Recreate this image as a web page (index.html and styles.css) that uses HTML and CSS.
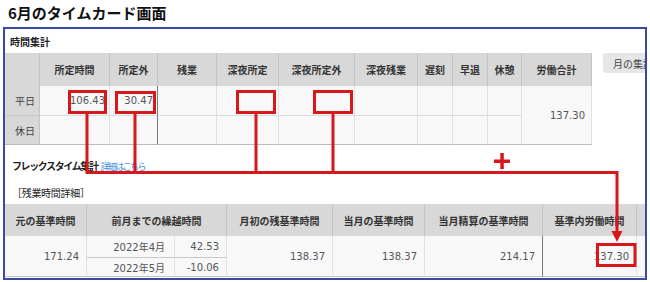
FILE: index.html
```html
<!DOCTYPE html>
<html lang="ja">
<head>
<meta charset="utf-8">
<title>6月のタイムカード画面</title>
<link rel="stylesheet" href="styles.css">
</head>
<body>
<div class="page">
  <h1 class="title">6月のタイムカード画面</h1>
  <div class="frame">
    <div class="sec-title">時間集計</div>
    <div class="sum-row">
      <table class="t1">
        <colgroup>
          <col class="c35"><col class="c70"><col class="c48"><col class="c59"><col class="c62"><col class="c76"><col class="c63"><col class="c35"><col class="c35"><col class="c34"><col class="c70">
        </colgroup>
        <thead>
          <tr>
            <th></th><th>所定時間</th><th>所定外</th><th>残業</th><th>深夜所定</th><th>深夜所定外</th><th>深夜残業</th><th>遅刻</th><th>早退</th><th>休憩</th><th>労働合計</th>
          </tr>
        </thead>
        <tbody>
          <tr class="r1">
            <th class="rl">平日</th><td>106.43</td><td class="dark">30.47</td><td></td><td></td><td></td><td></td><td></td><td></td><td></td><td rowspan="2" class="total">137.30</td>
          </tr>
          <tr class="r2">
            <th class="rl">休日</th><td></td><td class="dark"></td><td></td><td></td><td></td><td></td><td></td><td></td><td></td>
          </tr>
        </tbody>
      </table>
      <button class="btn">月の集計</button>
    </div>
    <div class="flex-line">フレックスタイム集計 <a class="link">詳細はこちら</a></div>
    <div class="sub-title">［残業時間詳細］</div>
    <table class="t2">
      <colgroup>
        <col class="c82"><col class="c88"><col class="c52"><col class="c106"><col class="c92"><col class="c118"><col class="c94"><col class="c60">
      </colgroup>
      <thead>
        <tr>
          <th>元の基準時間</th><th colspan="2">前月までの繰越時間</th><th>月初の残基準時間</th><th>当月の基準時間</th><th>当月精算の基準時間</th><th>基準内労働時間</th><th></th>
        </tr>
      </thead>
      <tbody>
        <tr class="s1">
          <td rowspan="2">171.24</td><td class="ym">2022年4月</td><td class="sub">42.53</td><td rowspan="2">138.37</td><td rowspan="2">138.37</td><td rowspan="2" class="dark">214.17</td><td rowspan="2">137.30</td><td rowspan="2"></td>
        </tr>
        <tr class="s2">
          <td class="ym">2022年5月</td><td class="sub">-10.06</td>
        </tr>
      </tbody>
    </table>
  </div>
  <svg class="marks" width="650" height="282" viewBox="0 0 650 282">
    <g fill="none" stroke="#d8171d" stroke-width="3">
      <rect x="69.5" y="91.5" width="36" height="21"/>
      <rect x="116.5" y="92.5" width="38" height="20"/>
      <rect x="237.5" y="91.5" width="37" height="21"/>
      <rect x="314.5" y="91.5" width="37" height="21"/>
      <rect x="597.5" y="244.5" width="37.5" height="21"/>
      <path d="M87 113V172.5H617V233M135 113V172.5M256 113V172.5M333 113V172.5"/>
    </g>
    <g fill="#d8171d">
      <polygon points="611.5,231 622.5,231 617,242"/>
      <rect x="494" y="159.5" width="16" height="3.5"/>
      <rect x="500.3" y="153" width="3.5" height="16"/>
    </g>
  </svg>
</div>
</body>
</html>
```

FILE: styles.css
```css
* { box-sizing: border-box; margin: 0; padding: 0; }
html, body { width: 650px; height: 282px; overflow: hidden; background: #fff; }
body { font-family: "DejaVu Sans", "Noto Sans CJK JP", sans-serif; color: #333; }

.page { position: relative; width: 650px; height: 282px; }

.title {
  font-family: "Noto Sans CJK JP", sans-serif;
  font-size: 15px;
  font-weight: bold;
  color: #111;
  line-height: 20px;
  height: 27px;
  padding: 3px 0 4px 8px;
}

.frame {
  margin-left: 3px;
  width: 644px;
  height: 253px;
  border: 2px solid #3b49a6;
  overflow: hidden;
  background: #fff;
}

.sec-title {
  height: 24px;
  padding: 7px 0 0 5px;
  font-family: "Noto Sans CJK JP", sans-serif;
  font-size: 10px;
  font-weight: bold;
  line-height: 12px;
  color: #222;
}

.sum-row { display: flex; align-items: flex-start; }

table { border-collapse: separate; border-spacing: 0; table-layout: fixed; flex: none; }
.t1 { width: 587px; }
.t2 { width: 692px; margin-top: 4px; }

.c34 { width: 34px; } .c35 { width: 35px; } .c48 { width: 48px; } .c52 { width: 52px; }
.c59 { width: 59px; } .c60 { width: 60px; } .c62 { width: 62px; } .c63 { width: 63px; }
.c70 { width: 70px; } .c76 { width: 76px; } .c82 { width: 82px; } .c88 { width: 88px; }
.c92 { width: 92px; } .c94 { width: 94px; } .c106 { width: 106px; } .c118 { width: 118px; }

thead th {
  background: #d8d8d8;
  border-right: 1px solid #c4c4c4;
  font-family: "Noto Sans CJK JP", sans-serif;
  font-size: 10px;
  font-weight: bold;
  color: #333;
  text-align: center;
  white-space: nowrap;
  overflow: hidden;
}
.t1 thead tr { height: 33px; }
.t2 thead tr { height: 32px; }

tbody td {
  background: #f8f8f8;
  border-right: 1px solid #e0e0e0;
  border-bottom: 1px solid #dcdcdc;
  text-align: right;
  padding-right: 4px;
  font-size: 10px;
  color: #555;
  white-space: nowrap;
}
tbody td.dark { border-right-color: #7a7a7a; }

.rl {
  background: #d8d8d8;
  border-right: 1px solid #c4c4c4;
  border-bottom: 1px solid #c8c8c8;
  text-align: right;
  padding-right: 4px;
  font-family: "Noto Sans CJK JP", sans-serif;
  font-size: 10px;
  font-weight: normal;
  color: #444;
}
.t1 .r1 { height: 30px; }
.t1 .r2 { height: 29px; }
.t1 .r2 td, .t1 .r2 th, .t1 td.total { border-bottom-color: #bbbbbb; }
.t1 td.total { padding-right: 6px; }

.btn {
  flex: none;
  margin-left: 11px;
  width: 60px;
  height: 20px;
  border: none;
  border-radius: 3px;
  background: #e6e6e6;
  font-family: "Noto Sans CJK JP", sans-serif;
  font-size: 10px;
  color: #444;
  text-align: left;
  padding-left: 10px;
  white-space: nowrap;
}

.flex-line {
  padding: 14px 0 0 7px;
  line-height: 14px;
  font-family: "Noto Sans CJK JP", sans-serif;
  font-size: 10px;
  font-weight: bold;
  letter-spacing: -1.4px;
  color: #222;
  white-space: nowrap;
}
.link {
  font-size: 9px;
  font-weight: normal;
  letter-spacing: -1.6px;
  color: #3d8fe0;
  margin-left: 2px;
}

.sub-title {
  margin-top: 12px;
  line-height: 14px;
  padding-left: 7px;
  font-family: "Noto Sans CJK JP", sans-serif;
  font-size: 10px;
  letter-spacing: -0.3px;
  color: #222;
}

.t2 tbody td { padding-right: 7px; }
.t2 .s1 { height: 22px; }
.t2 .s2 { height: 19px; }
.t2 td.ym { padding-right: 9px; font-family: "DejaVu Sans", "Noto Sans CJK JP", sans-serif; }
.t2 .s1 td.ym, .t2 .s1 td.sub { border-bottom-color: #c8c8c8; }
.t2 .s2 td, .t2 td[rowspan] { border-bottom-color: #c4c4c4; }

.marks { position: absolute; left: 0; top: 0; pointer-events: none; }
```
